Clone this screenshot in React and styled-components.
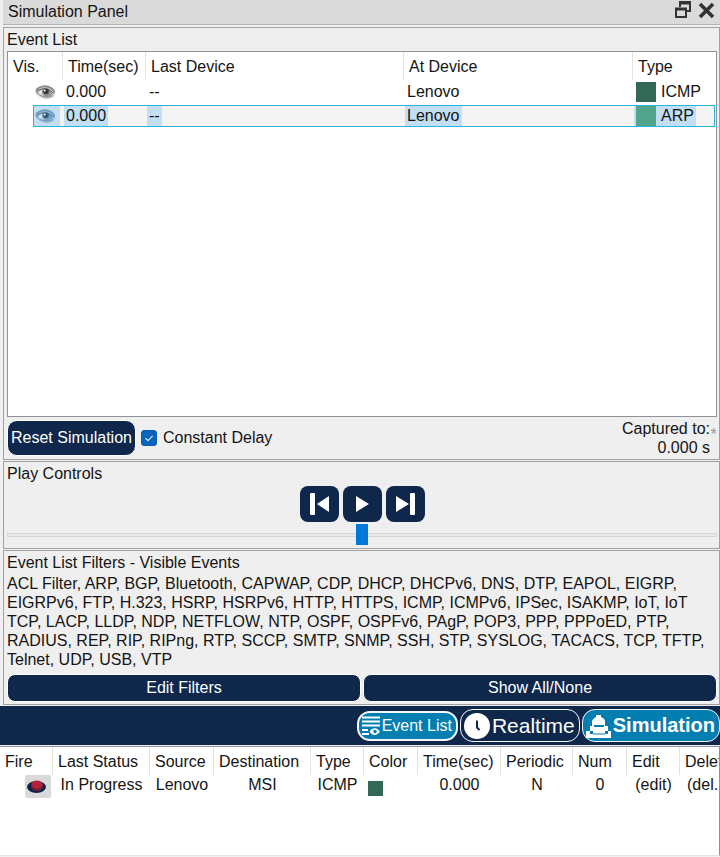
import React, { useState } from 'react';
import styled, { createGlobalStyle } from 'styled-components';

const navy = '#0e274b';
const blue = '#037eb0';
const line = '#a0a0a0';

const GlobalStyle = createGlobalStyle`
  *, *::before, *::after { box-sizing: border-box; }
  body { margin: 0; background: #f0f0f0; color: #141414; }
  body, button, input {
    font-family: "Liberation Sans", Arial, sans-serif;
    font-size: 16px;
  }
  button { cursor: pointer; }
`;

const Page = styled.div`
  display: flex;
  flex-direction: column;
  min-height: 100vh;
  overflow: hidden;
`;

const TitleBar = styled.header`
  display: flex;
  align-items: center;
  justify-content: space-between;
  height: 25px;
  margin: 0 0 2px 3px;
  padding: 0 5px;
  background: #dadada;
  border-bottom: 1px solid #b4b4b4;
`;

const Title = styled.h1`
  margin: 0;
  font-size: 16px;
  line-height: 20px;
  font-weight: 400;
`;

const WindowButtons = styled.div`
  display: flex;
  align-self: flex-start;
  gap: 6px;
  padding-top: 1px;
`;

const WindowButton = styled.button`
  display: flex;
  padding: 0;
  border: 0;
  background: none;
`;

const Group = styled.section`
  margin: 0 0 1px 3px;
  padding: 0 2px 2px 3px;
  border: 1px solid ${line};
  background: #efefef;
`;

const GroupLabel = styled.h2`
  margin: 0;
  font-size: 16px;
  line-height: 23px;
  font-weight: 400;
`;

const ListBox = styled.div`
  min-height: 366px;
  border: 1px solid #8f9199;
  background: #fff;
`;

const Table = styled.table`
  width: 100%;
  table-layout: fixed;
  border-collapse: separate;
  border-spacing: 0;
  white-space: nowrap;
`;

const Col = styled.col`
  width: ${(p) => (p.$w ? `${p.$w}px` : 'auto')};
`;

const Th = styled.th`
  height: 28px;
  padding: 1px 0 0 5px;
  border-right: 1px solid #e2e2e2;
  font-weight: 400;
  text-align: left;
  &:last-child { border-right: 0; }
`;

const EventCell = styled.td`
  height: 24px;
  padding: 1px 0;
`;

const Band = styled.div`
  display: flex;
  height: 22px;
  margin-left: ${(p) => (p.$first ? 25 : 0)}px;
  margin-right: ${(p) => (p.$last ? 1 : 0)}px;
  border: 0 solid ${(p) => (p.$selected ? '#2eb2dc' : 'transparent')};
  border-top-width: 1px;
  border-bottom-width: 1px;
  border-left-width: ${(p) => (p.$first ? 1 : 0)}px;
  border-right-width: ${(p) => (p.$last ? 1 : 0)}px;
  background: ${(p) => (p.$selected ? '#f4f4f4' : 'transparent')};
`;

const Mark = styled.span`
  display: flex;
  align-items: center;
  gap: 5px;
  margin-left: ${(p) => (p.$flush ? 0 : 1)}px;
  padding: ${(p) => (p.$flush ? '0 5px 0 1px' : '0 2px')};
  background: ${(p) => (p.$selected ? '#c3dff5' : 'transparent')};
`;

const Swatch = styled.span`
  display: block;
  width: ${(p) => p.$size}px;
  height: ${(p) => p.$size}px;
  background: ${(p) => p.$color};
`;

const ListFooter = styled.div`
  display: flex;
  align-items: center;
  padding-top: 2px;
`;

const NavyButton = styled.button`
  height: ${(p) => (p.$tall ? 36 : 28)}px;
  flex: ${(p) => (p.$grow ? '1 1 0' : '0 0 auto')};
  padding: 0 3px;
  border: 1px solid #fff;
  border-radius: ${(p) => (p.$tall ? 10 : 8)}px;
  background: ${navy};
  color: #fff;
`;

const CheckLabel = styled.label`
  display: flex;
  align-items: center;
  gap: 6px;
  margin-left: 5px;
`;

const Checkbox = styled.input`
  appearance: none;
  width: 16px;
  height: 16px;
  margin: 0;
  border: 1px solid #0b5cb0;
  border-radius: 3px;
  background: #fff;
  &:checked {
    background: #0a64bd
      url("data:image/svg+xml,%3Csvg xmlns='http://www.w3.org/2000/svg' viewBox='0 0 14 14'%3E%3Cpath d='M3.5 7.2 6 9.6l4.6-4.8' fill='none' stroke='%23dcecff' stroke-width='1.2'/%3E%3C/svg%3E");
  }
`;

const Captured = styled.div`
  display: flex;
  margin-left: auto;
  line-height: 19px;
  text-align: right;
`;

const CapturedText = styled.div`
  width: 90px;
`;

const Star = styled.span`
  width: 7px;
  padding-top: 6px;
  color: #999;
  text-align: center;
`;

const Transport = styled.div`
  display: flex;
  justify-content: center;
  gap: 4px;
  padding-top: 1px;
`;

const TransportButton = styled.button`
  display: flex;
  align-items: center;
  justify-content: center;
  width: 39px;
  height: 36px;
  padding: 0;
  border: 0;
  border-radius: 8px;
  background: ${navy};
`;

const Slider = styled.input`
  appearance: none;
  display: block;
  width: 100%;
  height: 23px;
  margin: 1px 0 0;
  background: none;
  &::-webkit-slider-runnable-track {
    height: 4px;
    border: 1px solid #d3d6d6;
    background: #e7eaea;
  }
  &::-webkit-slider-thumb {
    appearance: none;
    width: 12px;
    height: 21px;
    margin-top: -10px;
    background: #007ad9;
  }
`;

const FilterText = styled.p`
  margin: 0 0 5px;
  line-height: 19px;
`;

const FilterButtons = styled.div`
  display: flex;
  gap: 2px;
`;

const ModeBar = styled.nav`
  display: flex;
  align-items: center;
  justify-content: flex-end;
  gap: 2px;
  height: 39px;
  background: ${navy};
`;

const ModeButton = styled.button`
  display: flex;
  align-items: center;
  gap: 2px;
  height: ${(p) => (p.$small ? 30 : 33)}px;
  padding: 0 4px 0 3px;
  border: ${(p) => (p.$small ? 2 : 1)}px solid #f4f8fc;
  border-radius: 13px;
  background: ${(p) => (p.$active ? blue : navy)};
  color: #fff;
  font-size: ${(p) => p.$text}px;
  font-weight: ${(p) => (p.$bold ? 700 : 400)};
  white-space: nowrap;
`;

const PduPanel = styled.section`
  flex: 1;
  min-height: 110px;
  margin: 1px 0;
  border: 1px solid #8f9199;
  border-left: 0;
  border-bottom-color: #e4e4e4;
  background: #fff;
  overflow: hidden;
`;

const PduCell = styled.td`
  height: 23px;
  padding: 0 0 3px ${(p) => p.$indent || 0}px;
  text-align: ${(p) => p.$align || 'center'};
`;

const ColorCell = styled(PduCell)`
  padding: 3px 0 0 4px;
`;

const FireCell = styled(PduCell)`
  padding: 0 0 0 25px;
`;

const FireButton = styled.button`
  display: flex;
  align-items: center;
  justify-content: center;
  width: 26px;
  height: 23px;
  padding: 0 3px 0 0;
  border: 0;
  border-radius: 2px;
  background: #d9d9d9;
`;

const EyeIcon = ({ tinted }) => {
  const [dark, mid, pale] = tinted
    ? ['#2f5878', '#6f9cc0', '#9dbfdb']
    : ['#333', '#8c8c8c', '#cfcfcf'];
  return (
    <svg width="20" height="15" viewBox="0 0 20 15" role="img" aria-label="Visible">
      <path d="M0 6C3 2 8 0 13 1c4 1 6 4 7 8-1 4-5 5-10 5C6 13 2 11 0 6Z" fill={pale} />
      <path d="M1 5C5 1 11 0 16 3c2 1 3 3 4 5" fill="none" stroke={mid} strokeWidth="2" />
      <path d="M1 8c3-3 7-4 11-4 3 1 5 3 6 6-4 3-11 3-17-2Z" fill={mid} opacity=".7" />
      <path d="M3 8c1-2 3-3 5-3-1 3 0 4 2 6-3 0-5-1-7-3Z" fill="#f2f5f7" opacity=".8" />
      <circle cx="11" cy="7" r="4" fill={mid} />
      <circle cx="11" cy="6.500" r="2.600" fill={dark} />
      <circle cx="9.800" cy="5.500" r=".9" fill="#fff" />
      <path d="M1 7C5 3 13 2 18 8" fill="none" stroke={dark} strokeWidth=".7" />
      <path d="M5 10c3 2 8 3 12 1" fill="none" stroke={mid} strokeWidth="1" />
    </svg>
  );
};

const RestoreIcon = () => (
  <svg width="17" height="18" viewBox="0 0 17 18" fill="none" stroke="#333" strokeWidth="2">
    <path d="M5 6V1h10v9h-4" />
    <path d="M4 2h12" strokeWidth="3" />
    <path d="M1 8h10v8H1z" />
    <path d="M0 8h12" strokeWidth="3" />
  </svg>
);

const CloseIcon = () => (
  <svg width="17" height="18" viewBox="0 0 17 18" fill="none" stroke="#333" strokeWidth="3.600">
    <path d="m2 3 13 13M15 3 2 16" />
  </svg>
);

const TransportIcon = ({ kind }) => (
  <svg width="39" height="36" viewBox="0 0 39 36" fill="#fff">
    {kind === 'back' && (
      <>
        <rect x="10" y="7" width="5" height="22" rx="1" />
        <path d="M29 10v16L17 18Z" />
      </>
    )}
    {kind === 'play' && <path d="M13 10v16l13-8Z" />}
    {kind === 'forward' && (
      <>
        <path d="M10 10v16l13-8Z" />
        <rect x="24" y="7" width="5" height="22" rx="1" />
      </>
    )}
  </svg>
);

const ListIcon = () => (
  <svg width="18" height="20" viewBox="0 0 18 20" fill="none" stroke="#fff">
    <path d="M0 1.500h18M0 5.500h18M0 9.500h18M0 14h6M0 18h7" strokeWidth="2" />
    <path d="M7.500 15.500c2.500-4.500 7.500-4.500 10.500 0-3 4.500-8 4.500-10.500 0Z" fill="#fff" stroke="none" />
    <circle cx="13" cy="15.500" r="1.700" fill={blue} stroke="none" />
  </svg>
);

const ClockIcon = () => (
  <svg width="26" height="26" viewBox="0 0 26 26">
    <circle cx="13" cy="13" r="13" fill="#fff" />
    <path d="M13 7.500v7l2.500 2.500" fill="none" stroke={navy} strokeWidth="2" />
  </svg>
);

const SimulationIcon = () => (
  <svg width="25" height="24" viewBox="0 0 25 24" fill="#fff">
    <path d="M0 17h4v3h3v-3H4v-5h2V7c1-2 2-3 4-4V1h5v2c2 1 4 2 4 4v5h3v5h-3v3h3v-3h3v7H0Z" />
    <path d="M8 12h10" stroke={blue} strokeWidth="2" />
    <path d="M7 20h12" stroke={blue} strokeWidth="1" />
  </svg>
);

const FireIcon = () => (
  <svg width="20" height="15" viewBox="0 0 20 15">
    <ellipse cx="9.500" cy="8" rx="9.500" ry="6" fill="#0b2547" />
    <ellipse cx="10" cy="7.500" rx="6" ry="4.500" fill="#741c34" />
    <ellipse cx="10" cy="5.500" rx="5.500" ry="4" fill="#b3213f" />
  </svg>
);

const events = [
  { id: 1, time: '0.000', last: '--', at: 'Lenovo', type: 'ICMP', color: '#346856' },
  { id: 2, time: '0.000', last: '--', at: 'Lenovo', type: 'ARP', color: '#50a58a' },
];

const filters =
  'ACL Filter, ARP, BGP, Bluetooth, CAPWAP, CDP, DHCP, DHCPv6, DNS, DTP, EAPOL, EIGRP, EIGRPv6, FTP, H.323, HSRP, HSRPv6, HTTP, HTTPS, ICMP, ICMPv6, IPSec, ISAKMP, IoT, IoT TCP, LACP, LLDP, NDP, NETFLOW, NTP, OSPF, OSPFv6, PAgP, POP3, PPP, PPPoED, PTP, RADIUS, REP, RIP, RIPng, RTP, SCCP, SMTP, SNMP, SSH, STP, SYSLOG, TACACS, TCP, TFTP, Telnet, UDP, USB, VTP';

const pduColumns = [
  ['Fire', 53], ['Last Status', 97], ['Source', 64], ['Destination', 97], ['Type', 53],
  ['Color', 54], ['Time(sec)', 83], ['Periodic', 72], ['Num', 54], ['Edit', 53], ['Delete', 0],
];

function EventRow({ event, selected, onSelect }) {
  return (
    <tr onClick={onSelect} aria-selected={selected}>
      <EventCell>
        <Band $first $selected={selected}>
          <Mark $flush $selected={selected}><EyeIcon tinted={selected} /></Mark>
        </Band>
      </EventCell>
      {[event.time, event.last, event.at].map((value, i) => (
        <EventCell key={i}>
          <Band $selected={selected}><Mark $selected={selected}>{value}</Mark></Band>
        </EventCell>
      ))}
      <EventCell>
        <Band $last $selected={selected}>
          <Mark $selected={selected}>
            <Swatch $size={20} $color={event.color} />
            {event.type}
          </Mark>
        </Band>
      </EventCell>
    </tr>
  );
}

export default function App() {
  const [selected, setSelected] = useState(2);
  const [constantDelay, setConstantDelay] = useState(true);
  const [speed, setSpeed] = useState(50);

  return (
    <Page>
      <GlobalStyle />
      <TitleBar>
        <Title>Simulation Panel</Title>
        <WindowButtons>
          <WindowButton aria-label="Restore"><RestoreIcon /></WindowButton>
          <WindowButton aria-label="Close"><CloseIcon /></WindowButton>
        </WindowButtons>
      </TitleBar>

      <Group>
        <GroupLabel>Event List</GroupLabel>
        <ListBox>
          <Table>
            <colgroup>
              <Col $w={55} /><Col $w={83} /><Col $w={258} /><Col /><Col $w={83} />
            </colgroup>
            <thead>
              <tr>
                {['Vis.', 'Time(sec)', 'Last Device', 'At Device', 'Type'].map((h) => (
                  <Th key={h}>{h}</Th>
                ))}
              </tr>
            </thead>
            <tbody>
              {events.map((e) => (
                <EventRow key={e.id} event={e} selected={e.id === selected} onSelect={() => setSelected(e.id)} />
              ))}
            </tbody>
          </Table>
        </ListBox>
        <ListFooter>
          <NavyButton $tall>Reset Simulation</NavyButton>
          <CheckLabel>
            <Checkbox
              type="checkbox"
              checked={constantDelay}
              onChange={(e) => setConstantDelay(e.target.checked)}
            />
            Constant Delay
          </CheckLabel>
          <Captured>
            <CapturedText>Captured to: 0.000 s</CapturedText>
            <Star>*</Star>
          </Captured>
        </ListFooter>
      </Group>

      <Group>
        <GroupLabel>Play Controls</GroupLabel>
        <Transport>
          <TransportButton aria-label="Step back"><TransportIcon kind="back" /></TransportButton>
          <TransportButton aria-label="Play"><TransportIcon kind="play" /></TransportButton>
          <TransportButton aria-label="Step forward"><TransportIcon kind="forward" /></TransportButton>
        </Transport>
        <Slider
          type="range"
          aria-label="Play speed"
          value={speed}
          onChange={(e) => setSpeed(Number(e.target.value))}
        />
      </Group>

      <Group>
        <GroupLabel>Event List Filters - Visible Events</GroupLabel>
        <FilterText>{filters}</FilterText>
        <FilterButtons>
          <NavyButton $grow>Edit Filters</NavyButton>
          <NavyButton $grow>Show All/None</NavyButton>
        </FilterButtons>
      </Group>

      <ModeBar>
        <ModeButton $small $active $text={16}><ListIcon />Event List</ModeButton>
        <ModeButton $text={21}><ClockIcon />Realtime</ModeButton>
        <ModeButton $active $bold $text={20}><SimulationIcon />Simulation</ModeButton>
      </ModeBar>

      <PduPanel>
        <Table>
          <colgroup>
            {pduColumns.map(([name, w]) => <Col key={name} $w={w} />)}
          </colgroup>
          <thead>
            <tr>{pduColumns.map(([name]) => <Th key={name}>{name}</Th>)}</tr>
          </thead>
          <tbody>
            <tr>
              <FireCell><FireButton aria-label="Fire"><FireIcon /></FireButton></FireCell>
              <PduCell>In Progress</PduCell>
              <PduCell>Lenovo</PduCell>
              <PduCell>MSI</PduCell>
              <PduCell>ICMP</PduCell>
              <ColorCell><Swatch $size={15} $color="#346856" /></ColorCell>
              <PduCell>0.000</PduCell>
              <PduCell>N</PduCell>
              <PduCell>0</PduCell>
              <PduCell>(edit)</PduCell>
              <PduCell $align="left" $indent={7}>(del.</PduCell>
            </tr>
          </tbody>
        </Table>
      </PduPanel>
    </Page>
  );
}
